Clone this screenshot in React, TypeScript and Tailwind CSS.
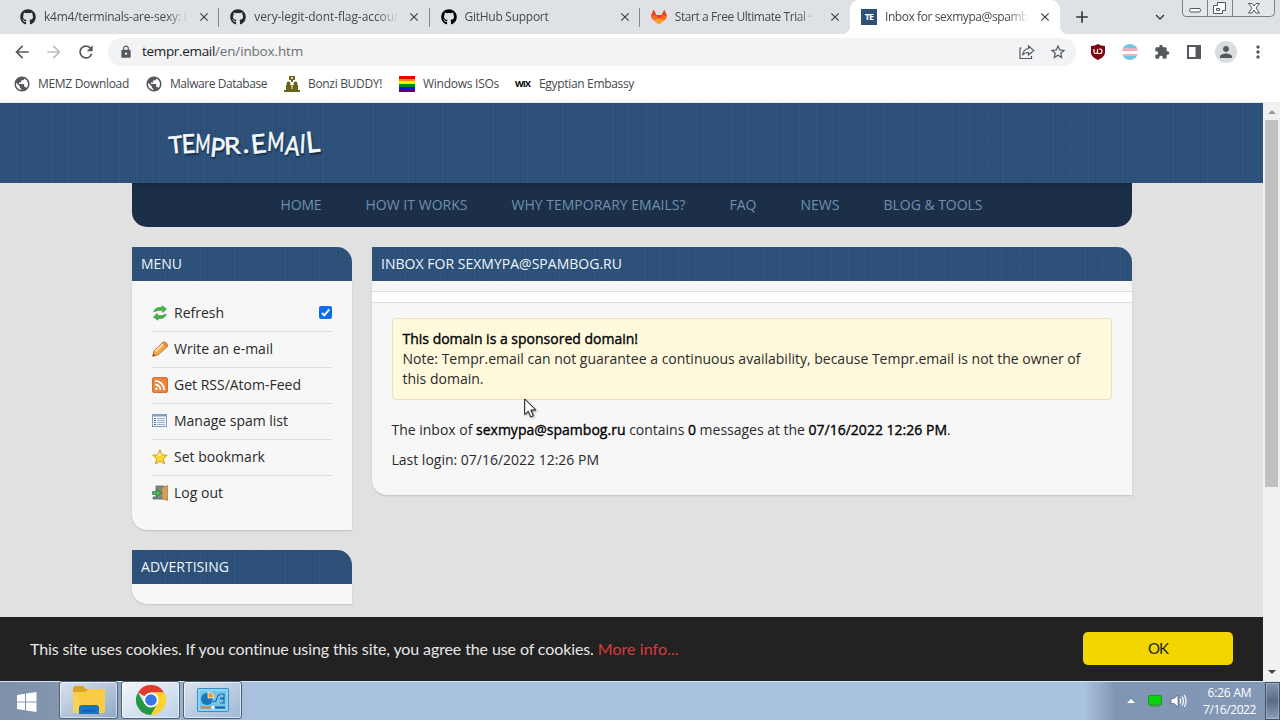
import { useLayoutEffect, useRef, useState, type ReactNode } from "react"
import { FaGithub } from "react-icons/fa"
import {
  MdAdd,
  MdArrowBack,
  MdArrowForward,
  MdClose,
  MdExtension,
  MdKeyboardArrowDown,
  MdLock,
  MdMoreVert,
  MdPerson,
  MdPublic,
  MdRefresh,
  MdStarBorder,
} from "react-icons/md"

// Text set to a fixed width, tracking is adjusted to fill it
function Fit({ width, text, className = "" }: { width: number; text: string; className?: string }) {
  const ref = useRef<HTMLSpanElement>(null)
  const [spacing, setSpacing] = useState(0)

  useLayoutEffect(() => {
    if (!ref.current) return
    const natural = ref.current.getBoundingClientRect().width
    setSpacing((width - natural) / text.length)
  }, [])

  return (
    <span ref={ref} className={`inline-block whitespace-pre ${className}`} style={{ letterSpacing: spacing }}>
      {text}
    </span>
  )
}

function GitlabIcon() {
  return (
    <svg viewBox="0 0 24 24" className="h-4 w-4">
      <path d="M12 23 1 14.500 0 10.500 4 1l4 8h8l4-8 4 9.500-1 4z" fill="#fc6d26" />
      <path d="M4 1l4 8L0 10.500z M20 1l-4 8 8 1.500z" fill="#e24329" />
      <path d="M8 9h8l-4 14z" fill="#e24329" />
      <path d="M12 23 5 17.500 12 13l7 4.500z" fill="#fca326" />
    </svg>
  )
}

function TempIcon() {
  return (
    <span className="flex h-4 w-4 items-center justify-center bg-[#2c5078] text-[9px] font-bold tracking-[-1px] text-white">TE</span>
  )
}

const TABS = [
  { title: "k4m4/terminals-are-sexy: D", width: 148, icon: <FaGithub className="h-4 w-4 text-[#24292e]" /> },
  { title: "very-legit-dont-flag-accoun", width: 147, icon: <FaGithub className="h-4 w-4 text-[#24292e]" /> },
  { title: "GitHub Support", width: 84, icon: <FaGithub className="h-4 w-4 text-black" /> },
  { title: "Start a Free Ultimate Trial · ", width: 139, icon: <GitlabIcon /> },
  { title: "Inbox for sexmypa@spamb", width: 143, icon: <TempIcon />, active: true },
]

function TabStrip() {
  return (
    <div className="flex h-[34px] shrink-0 bg-[#dee1e6] pl-[9px] text-[12px] text-[#45494d]">
      {TABS.map((tab, i) => (
        <div
          key={tab.title}
          className={`relative flex h-[34px] w-[210.250px] shrink-0 items-center pl-[11px] ${
            tab.active ? "rounded-t-[9px] bg-white" : ""
          }`}
        >
          {tab.icon}
          <div className="ml-2 w-[145px] shrink-0 overflow-hidden [mask-image:linear-gradient(to_right,black_122px,transparent_144px)]">
            <Fit width={tab.width} text={tab.title} />
          </div>
          <MdClose className="ml-[8px] h-[14px] w-[14px] shrink-0 text-[#3c4043]" />
          {i < 3 && <span className="absolute right-0 top-2 h-[19px] w-px bg-[#85888d]" />}
          {tab.active && (
            <>
              <span className="absolute -left-2 bottom-0 h-2 w-2 bg-[radial-gradient(circle_at_0_0,#dee1e6_8px,white_8px)]" />
              <span className="absolute -right-2 bottom-0 h-2 w-2 bg-[radial-gradient(circle_at_100%_0,#dee1e6_8px,white_8px)]" />
            </>
          )}
        </div>
      ))}
      <MdAdd className="ml-[12px] mt-[7px] h-5 w-5 text-[#33363a]" />
      <MdKeyboardArrowDown className="ml-[59px] mt-[8px] h-[18px] w-[18px] text-[#3c4043]" />
      <svg viewBox="0 0 94 18" className="ml-[13px] h-[18px] w-[94px]" fill="none" stroke="#7b8086">
        <path d="M.5 0v13q0 3.500 3.500 3.500h84.500q4 0 4-4V0M25.500 0v16M50.500 0v16" fill="#e3e6ea" />
        <rect x="7.500" y="8.500" width="11" height="3.500" rx="1.500" fill="#fff" stroke="#555" />
        <path d="M35.500 2.500h8v8h-3v3h-9v-8h4z M34.500 8.500h3v2h-3z" fill="#fff" stroke="#555" />
        <path d="M66.500 3.500h3.500l2 2.500 2-2.500h3.500l-3.500 4.500 3.500 5h-3.500l-2-3-2 3h-3.500l3.500-5z" fill="#fff" stroke="#555" />
      </svg>
    </div>
  )
}

function Toolbar() {
  return (
    <div className="flex h-9 shrink-0 items-center bg-white text-[#55585c]">
      <MdArrowBack className="ml-[12px] h-5 w-5" />
      <MdArrowForward className="ml-[12px] h-5 w-5 text-[#bdbfc2]" />
      <MdRefresh className="ml-[12px] h-5 w-5" />
      <div className="ml-[12px] flex h-7 w-[968px] items-center rounded-full bg-[#f1f3f4] pl-[11px]">
        <MdLock className="h-[14px] w-[14px]" />
        <div className="-mt-px ml-[9px] text-[13.500px]">
          <Fit width={73} text="tempr.email" className="text-[#202124]" />
          <Fit width={88} text="/en/inbox.htm" className="text-[#6b6f73]" />
        </div>
        <svg viewBox="0 0 16 16" className="ml-auto h-4 w-4" fill="none" stroke="currentColor" strokeWidth="1.200">
          <path d="M2.500 4H1v10.500h11.500V12" />
          <path d="M9.500 2 14.800 6.500l-5.300 4.500V8.500c-3 0-4.800.9-6 2.700C4 7.500 6 5 9.500 4.500z" />
        </svg>
        <MdStarBorder className="ml-[14px] mr-[9px] h-[18px] w-[18px]" />
      </div>
      <svg viewBox="0 0 16 16" className="ml-[14px] h-4 w-4">
        <path d="M8 0c2 1.300 4.500 2 7 2v6c0 4-3 6.300-7 8-4-1.700-7-4-7-8V2c2.500 0 5-.7 7-2z" fill="#7e0611" />
        <path d="M4 5v3q0 1.500 1.500 1.500T7.500 8V5M9 5h1q2 0 2 2.200T10 9.500H7.500" fill="none" stroke="#fff" strokeWidth="1.200" />
      </svg>
      <span className="ml-4 h-4 w-4 rounded-full bg-[linear-gradient(#6fc8df_25%,#f3aebd_25%_42%,#fff_42%_60%,#f3aebd_60%_76%,#6fc8df_76%)]" />
      <MdExtension className="ml-4 h-4 w-4" />
      <svg viewBox="0 0 14 14" className="ml-[17px] h-[14px] w-[14px]">
        <rect x="1" y="1" width="12" height="12" fill="#fff" stroke="#55585c" strokeWidth="2" />
        <path d="M8.500 1h5v12h-5z" fill="#55585c" />
      </svg>
      <span className="ml-[14px] flex h-[22px] w-[22px] items-center justify-center rounded-full bg-[#d9dde2]">
        <MdPerson className="h-[18px] w-[18px]" />
      </span>
      <MdMoreVert className="ml-[11px] h-5 w-5" />
    </div>
  )
}

function BookmarksBar() {
  return (
    <div className="flex h-[33px] shrink-0 items-center border-b border-[#e6eef5] bg-white pb-[5px] pl-[13px] text-[12px] text-[#45494d]">
      <MdPublic className="h-[18px] w-[18px] text-[#55585c]" />
      <Fit width={91} text="MEMZ Download" className="ml-[7px]" />
      <MdPublic className="ml-[16px] h-[18px] w-[18px] text-[#55585c]" />
      <Fit width={97} text="Malware Database" className="ml-[7px]" />
      <svg viewBox="0 0 16 16" className="ml-[17px] h-4 w-4" fill="#6b6318">
        <path d="M5 0h6v4H9v2H7V4H5z" />
        <circle cx="8" cy="2" r="1" fill="#fff" />
        <circle cx="4.500" cy="7.500" r="2" />
        <circle cx="11.500" cy="7.500" r="2" />
        <path d="M2 9h5.500v4H8.500V9H14v5h2v2H0v-2h2z" />
      </svg>
      <Fit width={74} text="Bonzi BUDDY!" className="ml-2" />
      <span className="ml-[17px] h-4 w-4 bg-[linear-gradient(#e00_17%,#ff8c00_17%_33%,#fff000_33%_50%,#008a20_50%_67%,#0018e8_67%_84%,#5a0075_84%)]" />
      <Fit width={76} text="Windows ISOs" className="ml-2" />
      <Fit width={15} text="WIX" className="ml-[16px] text-[9px] font-bold text-black" />
      <Fit width={95} text="Egyptian Embassy" className="ml-[9px]" />
    </div>
  )
}

const LETTERS = [
  { c: "T", box: "w-[13px]", cls: "translate-y-px -rotate-6 scale-x-90 scale-y-90" },
  { c: "E", box: "w-[13px]", cls: "-rotate-3 scale-x-90" },
  { c: "M", box: "w-[16px]", cls: "rotate-3 scale-x-[.62]" },
  { c: "P", box: "w-[13px]", cls: "translate-y-1 rotate-6 scale-x-90" },
  { c: "R", box: "w-[17px]", cls: "translate-y-0.5 -rotate-3 scale-y-90" },
  { c: ".", box: "w-[10px]", cls: "" },
  { c: "E", box: "w-[16px]", cls: "-rotate-6" },
  { c: "M", box: "w-[18px]", cls: "-translate-y-0.5 rotate-3 scale-x-[.7]" },
  { c: "A", box: "w-[15px]", cls: "translate-y-0.5 rotate-6 scale-x-[.8]" },
  { c: "I", box: "w-[6px]", cls: "rotate-3 scale-x-75" },
  { c: "L", box: "w-[13px]", cls: "-translate-y-0.5 -rotate-6 scale-y-110" },
]

function Logo() {
  return (
    <div className="flex h-7 w-[150px] text-[26px] leading-7 text-[#f4fbff] [-webkit-text-stroke:0.7px_#f4fbff] [font-family:Lato,sans-serif] [text-shadow:1px_2px_2px_#0c1d30]">
      {LETTERS.map((l, i) => (
        <span key={i} className={`flex shrink-0 justify-center ${l.box}`}>
          <span className={`inline-block ${l.cls}`}>{l.c}</span>
        </span>
      ))}
    </div>
  )
}

// woven texture of the header and the panel titles
const LINEN =
  "bg-[#2d5079] bg-[repeating-linear-gradient(90deg,rgba(10,35,65,.07)_0_1px,transparent_1px_5px),repeating-linear-gradient(90deg,rgba(110,150,190,.06)_0_1px,transparent_1px_17px),repeating-linear-gradient(0deg,rgba(95,135,175,.05)_0_1px,transparent_1px_3px)]"

const NAV = [
  { label: "HOME", width: 41 },
  { label: "HOW IT WORKS", width: 102 },
  { label: "WHY TEMPORARY EMAILS?", width: 174 },
  { label: "FAQ", width: 27 },
  { label: "NEWS", width: 39 },
  { label: "BLOG & TOOLS", width: 99 },
]

function PanelTitle({ children }: { children: ReactNode }) {
  return <div className={`flex h-[34px] items-center rounded-tr-[15px] px-[9.500px] pb-0.5 text-[14px] text-[#f0f6fb] ${LINEN}`}>{children}</div>
}

function RefreshIcon() {
  return (
    <svg viewBox="0 0 16 16" className="h-4 w-4" fill="#42b83c" stroke="#23852b" strokeWidth=".6">
      <path d="M1.800 7C2.500 3.500 6 2 10 2.800V.8L14.500 4 10.800 7.500 10.500 5.500C7 4.800 4.500 5.500 1.800 7z" />
      <path d="M14.200 9C13.500 12.500 10 14 6 13.200v2L1.500 12 5.200 8.500l.3 2C9 11.200 11.500 10.500 14.200 9z" />
    </svg>
  )
}

function PencilIcon() {
  return (
    <svg viewBox="0 0 16 16" className="h-4 w-4">
      <path d="M.7 15.300 2 10 10.500 1.500q2-1.500 4 .5t.5 4L6 14z" fill="#f2a54a" stroke="#b86a20" strokeWidth=".8" />
      <path d="M3.500 10.500 11 3" stroke="#ffe0a0" strokeWidth="1.800" />
      <path d="M11 1.500 14.700 5.500" stroke="#d97b55" strokeWidth="1.400" />
      <path d="M.7 15.300 1.400 12.800l1.700 1.700z" fill="#444" />
    </svg>
  )
}

function RssIcon() {
  return (
    <svg viewBox="0 0 16 16" className="h-4 w-4" fill="none" stroke="#fff" strokeWidth="1.800">
      <rect x=".5" y=".5" width="15" height="15" rx="1.500" fill="#e9853f" stroke="#d9702f" strokeWidth="1" />
      <path d="M3 7.500A5.500 5.500 0 0 1 8.500 13M3 3.800A9.200 9.200 0 0 1 12.200 13" />
      <circle cx="4.300" cy="11.800" r="1.300" fill="#fff" stroke="none" />
    </svg>
  )
}

function ListIcon() {
  return (
    <svg viewBox="0 0 16 16" className="h-4 w-4" fill="none">
      <rect x=".5" y="1.500" width="14" height="12" fill="#f4f8fc" stroke="#7f9dbd" />
      <path d="M1 2.500h13" stroke="#7aa3d0" strokeWidth="2" />
      <path d="M2 5.500h2M2 7.500h2M2 9.500h2M2 11.500h2" stroke="#466b95" />
      <path d="M5 5.500h8M5 7.500h8M5 9.500h8M5 11.500h8" stroke="#9eb0c4" />
    </svg>
  )
}

function StarIcon() {
  return (
    <svg viewBox="0 0 16 16" className="h-4 w-4">
      <path d="m8 .8 2 5 5.300.5-4 3.500 1.300 5.200L8 12.100 3.400 15l1.300-5.200-4-3.500 5.300-.5z" fill="#f8d82c" stroke="#c38a17" strokeWidth=".8" />
      <path d="M8 3.200 9.300 7H5z" fill="#fff39a" />
    </svg>
  )
}

function ExitIcon() {
  return (
    <svg viewBox="0 0 16 16" className="h-4 w-4">
      <path d="M4 1h8v13H1v-2h3z" fill="#7b8b7e" stroke="#5c6b62" strokeWidth=".8" />
      <path d="M10 2.500 15.500.5v15L10 13.500z" fill="#d3a05c" stroke="#a8793d" strokeWidth=".7" />
      <path d="M.5 6.500h4V4l5 4-5 4V9.500h-4z" fill="#51b15a" stroke="#277a39" strokeWidth=".7" />
    </svg>
  )
}

const MENU = [
  { label: "Refresh", width: 50, icon: <RefreshIcon />, checked: true },
  { label: "Write an e-mail", width: 99, icon: <PencilIcon /> },
  { label: "Get RSS/Atom-Feed", width: 127, icon: <RssIcon /> },
  { label: "Manage spam list", width: 114, icon: <ListIcon /> },
  { label: "Set bookmark", width: 91, icon: <StarIcon /> },
  { label: "Log out", width: 49, icon: <ExitIcon /> },
]

const STRONG = "text-black [-webkit-text-stroke:0.35px_black]"

function Sidebar() {
  return (
    <div className="w-[220px] shrink-0">
      <PanelTitle>
        <Fit width={41} text="MENU" />
      </PanelTitle>
      <div className="h-[249px] rounded-bl-[15px] bg-[#f7f7f7] px-5 pt-[15px] shadow-[0_1px_2px_rgba(0,0,0,.15)]">
        {MENU.map((m, i) => (
          <div key={m.label} className={`flex h-9 items-center pb-0.5 ${i < MENU.length - 1 ? "border-b border-[#dcdcdc]" : "pb-[3px]"}`}>
            {m.icon}
            <Fit width={m.width} text={m.label} className="ml-[6.500px]" />
            {m.checked && (
              <svg viewBox="0 0 13 13" className="ml-auto h-[13px] w-[13px]">
                <rect width="13" height="13" rx="2" fill="#0b6ef0" />
                <path d="m2.800 6.800 2.500 2.600 5-6" fill="none" stroke="#fff" strokeWidth="1.900" />
              </svg>
            )}
          </div>
        ))}
      </div>
      <div className="mt-5">
        <PanelTitle>
          <Fit width={88} text="ADVERTISING" />
        </PanelTitle>
        <div className="h-5 rounded-bl-[15px] bg-[#f7f7f7] shadow-[0_1px_2px_rgba(0,0,0,.12)]" />
      </div>
    </div>
  )
}

function Inbox() {
  return (
    <div className="w-[760px] shrink-0">
      <PanelTitle>
        <Fit width={241} text="INBOX FOR SEXMYPA@SPAMBOG.RU" />
      </PanelTitle>
      <div className="relative h-[214px] rounded-bl-[15px] bg-[#f7f7f7] pt-[10px] shadow-[0_1px_2px_rgba(0,0,0,.15)]">
        <div className="h-3 border-y border-[#dedede] bg-white" />
        <div className="mx-5 mt-[15px] h-[82px] rounded border border-[#efdcb8] bg-[#fef9dd] px-[10px] pt-[10px] leading-5">
          <Fit width={235.500} text="This domain is a sponsored domain!" className={`${STRONG} align-top`} />
          <div className="h-5">
            <Fit width={678} text="Note: Tempr.email can not guarantee a continuous availability, because Tempr.email is not the owner of" className="align-top" />
          </div>
          <div className="h-5">
            <Fit width={81} text="this domain." className="align-top" />
          </div>
        </div>
        <div className="mx-5 mt-[19px] flex h-5 items-center whitespace-pre">
          <Fit width={84.500} text="The inbox of " />
          <Fit width={149.500} text="sexmypa@spambog.ru" className={STRONG} />
          <Fit width={62.500} text=" contains " />
          <Fit width={8} text="0" className={STRONG} />
          <Fit width={112.500} text=" messages at the " />
          <Fit width={138.500} text="07/16/2022 12:26 PM" className={STRONG} />
          <span>.</span>
        </div>
        <div className="mx-5 mt-[10px] flex h-5 items-center">
          <Fit width={207.500} text="Last login: 07/16/2022 12:26 PM" />
        </div>
        {/* mouse pointer */}
        <svg viewBox="0 0 13 20" className="absolute left-[152px] top-[117px] h-5 w-[13px] drop-shadow-[1px_1px_1px_rgba(0,0,0,.4)]">
          <path d="M.7 1v15.500l3.600-3.300 2.400 5.600 2.500-1.100L6.800 12h5z" fill="#fff" stroke="#111" strokeWidth="1" />
        </svg>
      </div>
    </div>
  )
}

function Page() {
  return (
    <div className="flex h-[578px] shrink-0">
      <div className="flex w-[1263px] flex-col bg-[#e1e1e1]">
        <div className="h-[514px] overflow-hidden text-[14px] text-[#2a2a2a] [font-family:'Open_Sans',sans-serif]">
          <div className={`h-20 pl-[169px] pt-[26px] ${LINEN}`}>
            <Logo />
          </div>
          <div className="mx-auto flex h-11 w-[1000px] items-center justify-center gap-11 rounded-b-[15px] bg-[#1b3048] pb-0.5 text-[#6f8fae] shadow-[inset_0_4px_5px_-3px_#10223a]">
            {NAV.map(n => (
              <Fit key={n.label} width={n.width} text={n.label} />
            ))}
          </div>
          <div className="mx-auto mt-5 flex w-[1000px] items-start gap-5">
            <Sidebar />
            <Inbox />
          </div>
        </div>
        <div className="flex h-16 shrink-0 items-center bg-[#222] pl-[30px] pr-[30px] text-[16px] [font-family:Lato,sans-serif]">
          <Fit width={568} text="This site uses cookies. If you continue using this site, you agree the use of cookies. " className="text-[#e6e6e6]" />
          <Fit width={81} text="More info..." className="text-[#d83b3b]" />
          <button className="mb-0.5 ml-auto h-[33px] w-[150px] rounded-[5px] bg-[#f1d600] text-[#222]">
            <Fit width={20} text="OK" className="text-[15px]" />
          </button>
        </div>
      </div>
      <div className="flex w-[17px] flex-col items-center bg-[#f1f1f1]">
        <div className="mt-[7px] border-x-4 border-b-4 border-x-transparent border-b-[#9a9a9a]" />
        <div className="mt-[6px] h-[367px] w-[13px] bg-[#c1c1c1]" />
        <div className="mb-[7px] mt-auto border-x-4 border-t-4 border-x-transparent border-t-[#444]" />
      </div>
    </div>
  )
}

const TASK =
  "flex h-[38px] w-[59px] items-center justify-center rounded-[3px] border border-[#4c6078] bg-linear-to-br shadow-[inset_0_0_0_1px_rgba(255,255,255,.6)]"

function Taskbar() {
  return (
    <div className="flex h-[39px] shrink-0 items-start border-t border-[#d5e6f3] bg-[linear-gradient(90deg,#7f90a8_0,#8396ae_58px,#a8c2df_250px,#a8c2df_1085px,#8196b4_1115px,#8298b5_1264px)]">
      <svg viewBox="0 0 20 20" className="ml-[17px] mt-[10px] h-5 w-5" fill="#fff">
        <path d="M0 3 8 1.800V9.500H0zM9 1.600 19.500 0v9.500H9zM0 10.500h8v7.700L0 17zM9 10.500h10.500V20L9 18.400z" />
      </svg>
      <div className="-mt-px ml-[22px] flex gap-[3px]">
        <div className={`${TASK} from-[#dbe2ec] to-[#8fa9c8]`}>
          <svg viewBox="0 0 34 30" className="h-[30px] w-[34px]">
            <path d="M1 4q0-3 3-3h7l3 3h18v4H1z" fill="#dba321" />
            <path d="M1 7h12l3-3h17v22q0 2-2 2H3q-2 0-2-2z" fill="#fbcc45" />
            <path d="M1 26V8l16 20H3q-2 0-2-2z" fill="#fbd765" opacity=".5" />
            <path d="M7 29v-6q0-3 3-3h14q3 0 3 3v6z" fill="#1974bf" />
            <path d="M11 25h12v1.500H11z" fill="#0d5a9e" />
          </svg>
        </div>
        <div className={`${TASK} from-[#f4f6fa] to-[#bcd0e6]`}>
          <svg viewBox="0 0 30 30" className="h-[30px] w-[30px]">
            <path d="M15 15 2 7.500A15 15 0 0 1 28 7.500H15z" fill="#e33b2e" />
            <path d="M15 15v7.500L8.500 18.750 2 7.500A15 15 0 0 0 15 30l6.500-11.250z" fill="#269646" />
            <path d="M15 7.500h13A15 15 0 0 1 15 30l6.500-11.250z" fill="#fdd32b" />
            <circle cx="15" cy="15" r="7.500" fill="#fff" />
            <circle cx="15" cy="15" r="5.800" fill="#3877e8" />
          </svg>
        </div>
        <div className={`${TASK} from-[#dbe2ec] to-[#9fb8d6]`}>
          <svg viewBox="0 0 32 24" className="h-6 w-8">
            <rect x=".5" y=".5" width="31" height="23" rx="1" fill="#74c4ec" stroke="#2e91cc" />
            <rect x="2" y="2" width="28" height="20" fill="none" stroke="#a9e0f6" />
            <circle cx="10" cy="11" r="6" fill="#1976b8" />
            <path d="M11 10V4a6 6 0 0 1 6 6z" fill="#f29a3b" stroke="#fff" strokeWidth=".7" />
            <path d="m16 14 3-1 2-6h2" fill="none" stroke="#165c99" />
            <path d="M23 6h4v4h-4M23 11h4v4h-4" fill="none" stroke="#1b6aa8" strokeWidth="1.200" />
            <path d="M4 19.500h10" stroke="#d77e32" strokeWidth="2" />
            <path d="M18 19.500h10" stroke="#155f9d" strokeWidth="2" />
            <circle cx="16" cy="19.500" r="1.700" fill="#fff" />
          </svg>
        </div>
      </div>
      <div className="ml-auto flex h-[38px] items-center text-white">
        <div className="border-x-4 border-b-4 border-x-transparent border-b-white" />
        <svg viewBox="0 0 14 12" className="ml-[13px] h-3 w-[14px]">
          <rect x=".5" y=".5" width="13" height="9.500" rx="1" fill="#0bd30b" stroke="#25912d" />
          <path d="M3 11.500h8" stroke="#3a9a48" />
        </svg>
        <svg viewBox="0 0 17 16" className="ml-[8px] h-4 w-[17px]" fill="none" stroke="#fff" strokeWidth="1.200">
          <path d="M1 5.500h3L8 2v12L4 10.500H1z" fill="#fff" stroke="#4c5d75" strokeWidth=".7" />
          <path d="M10 5.500q1.500 2.500 0 5M12 3.500q3 4.500 0 9M14.300 2q3.500 6 0 12" />
        </svg>
        <div className="ml-[16px] flex w-[53px] flex-col items-center text-[12px] leading-[17px]">
          <Fit width={44} text="6:26 AM" />
          <Fit width={53} text="7/16/2022" />
        </div>
        <div className="ml-[9px] h-[38px] w-[15px] border border-[#42546b] bg-linear-to-b from-[#8496ae] via-[#596c85] to-[#8da0b8] shadow-[inset_0_0_0_1px_rgba(255,255,255,.25)]" />
      </div>
    </div>
  )
}

export default function App() {
  return (
    <div className="flex h-[720px] w-[1280px] flex-col overflow-hidden bg-white [font-family:'Open_Sans',sans-serif]">
      <TabStrip />
      <Toolbar />
      <BookmarksBar />
      <Page />
      <Taskbar />
    </div>
  )
}
